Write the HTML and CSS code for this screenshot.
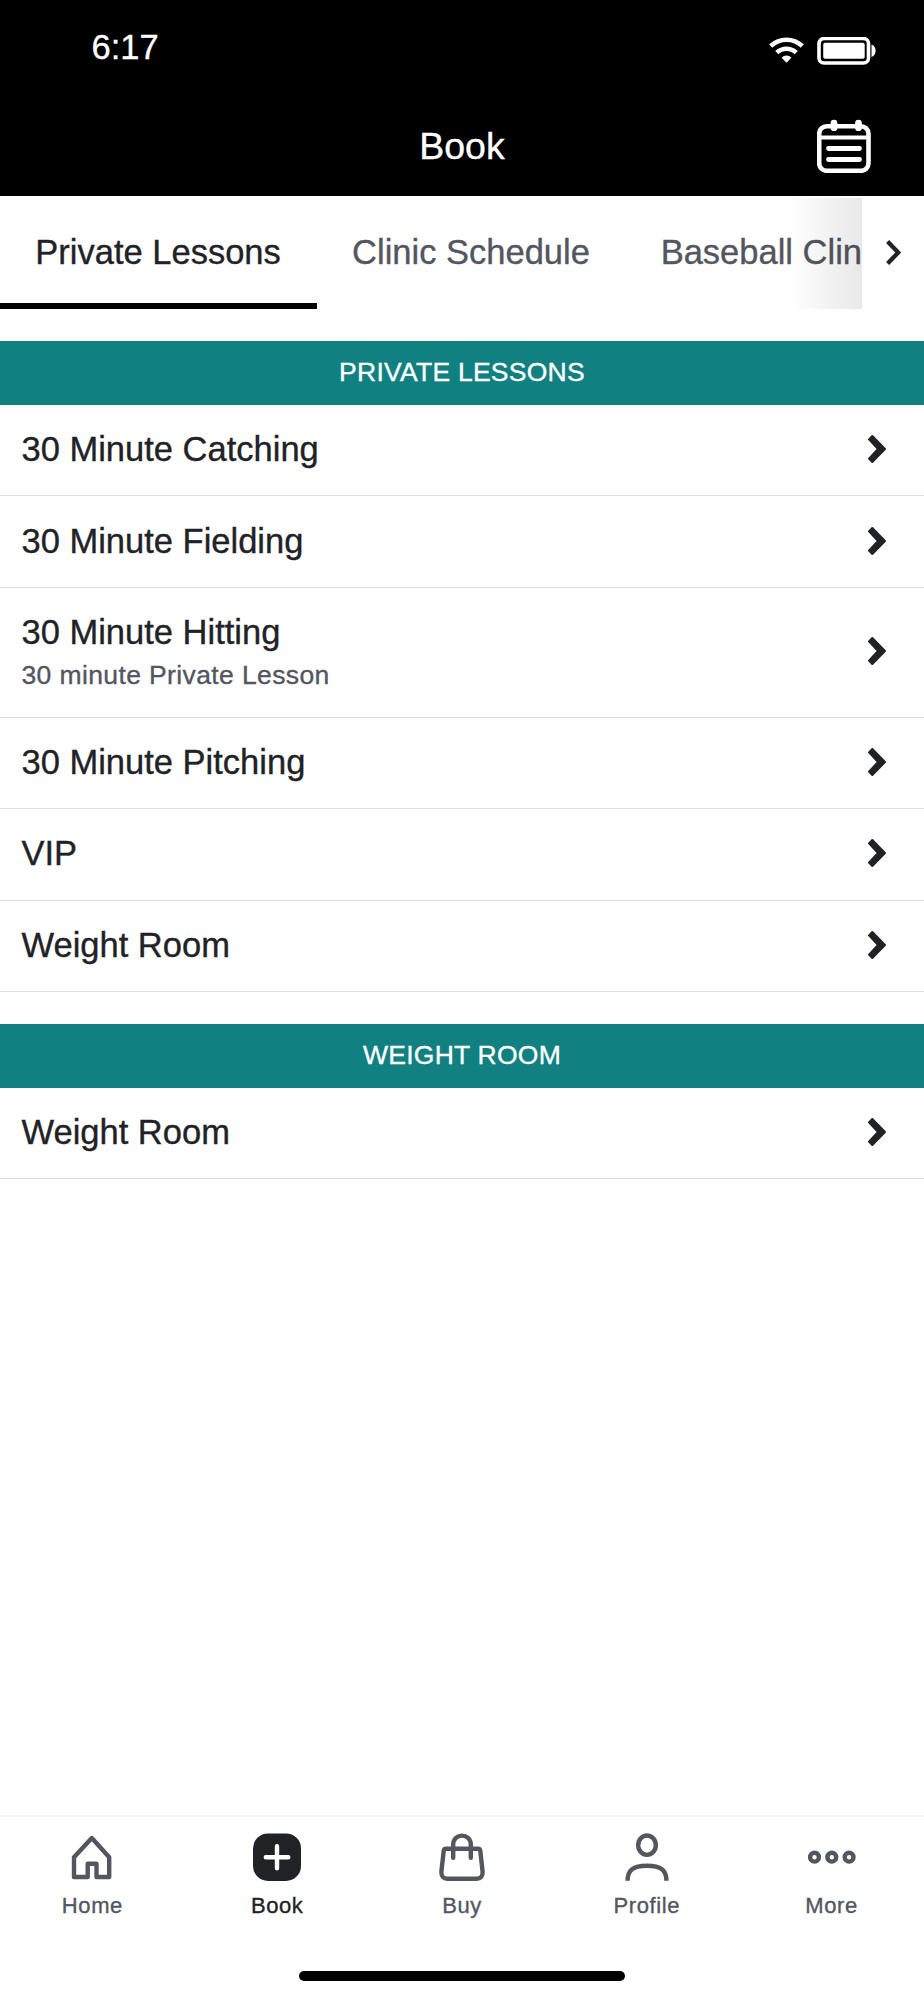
FILE: index.html
```html
<!DOCTYPE html>
<html lang="en">
<head>
<meta charset="utf-8">
<title>Book</title>
<link rel="stylesheet" href="styles.css">
</head>
<body>
<svg width="0" height="0" class="defs">
  <symbol id="chev" viewBox="0 0 18 28"><path d="M4.300 1 17 14 4.300 27 1 23.600 10 14 1 4.400Z" fill="#212226" stroke="#212226" stroke-width="2" stroke-linejoin="round"/></symbol>
</svg>
<div class="app">
  <header class="header">
    <div class="status">
      <span class="time">6:17</span>
      <svg class="status-icons" width="107" height="28" viewBox="0 0 107 28" fill="none" stroke="#fff">
        <path d="M1.700 9a23 23 0 0 1 31.600 0M7.800 15.600a14 14 0 0 1 19.400 0" stroke-width="4.600"/>
        <path d="M12.600 20.700a6.800 6.800 0 0 1 9.800 0l-4.900 5z" fill="#fff" stroke="none"/>
        <rect x="50" y="1.500" width="49.500" height="24.500" rx="5" stroke-width="3.600"/>
        <rect x="54.200" y="5.700" width="41.500" height="16" rx="2" fill="#fff" stroke="none"/>
        <path d="M102.500 7.500c5.500 2 5.500 10.500 0 12.500z" fill="#fff" stroke="none"/>
      </svg>
    </div>
    <div class="titlebar">
      <h1 class="title">Book</h1>
      <svg class="calendar" width="54" height="54" viewBox="0 0 54 54" fill="none" stroke="#fff" stroke-linecap="round">
        <rect x="2.200" y="7.300" width="49.300" height="44.500" rx="7.500" stroke-width="4.600"/>
        <path d="M4 18.500h46" stroke-width="4.200"/>
        <path d="M11.500 29.500h31M11.500 40.500h31" stroke-width="4.800"/>
        <path d="M17 4.200v4.500M41.500 4.200v4.500" stroke-width="6.800"/>
      </svg>
    </div>
  </header>
  <nav class="tabs">
    <div class="tab-scroll">
      <a class="tab active">Private Lessons</a>
      <a class="tab">Clinic Schedule</a>
      <a class="tab">Baseball Clin</a>
      <div class="fade"></div>
    </div>
    <svg class="tab-next" width="16" height="28" viewBox="0 0 16 28" fill="none" stroke="#212226" stroke-width="4.300"><path d="M1.600 2.600 12.200 13.600 1.600 24.600"/></svg>
  </nav>
  <main class="content">
    <section class="group">
      <h2 class="group-title">PRIVATE LESSONS</h2>
      <div class="row"><div class="name">30 Minute Catching</div><svg class="chev"><use href="#chev"/></svg></div>
      <div class="row"><div class="name">30 Minute Fielding</div><svg class="chev"><use href="#chev"/></svg></div>
      <div class="row tall"><div><div class="name">30 Minute Hitting</div><div class="desc">30 minute Private Lesson</div></div><svg class="chev"><use href="#chev"/></svg></div>
      <div class="row"><div class="name">30 Minute Pitching</div><svg class="chev"><use href="#chev"/></svg></div>
      <div class="row"><div class="name">VIP</div><svg class="chev"><use href="#chev"/></svg></div>
      <div class="row"><div class="name">Weight Room</div><svg class="chev"><use href="#chev"/></svg></div>
    </section>
    <section class="group">
      <h2 class="group-title">WEIGHT ROOM</h2>
      <div class="row"><div class="name">Weight Room</div><svg class="chev"><use href="#chev"/></svg></div>
    </section>
  </main>
  <footer class="bottom">
    <div class="nav">
      <a class="item">
        <svg class="icon" viewBox="0 0 50 50"><path d="M24.800 5 42.200 24.200V44H29.500V30.700H20.700V44H7V24.200Z"/></svg>
        <span>Home</span>
      </a>
      <a class="item current">
        <svg class="icon" viewBox="0 0 50 50"><rect class="solid" x="1" y="0.400" width="48" height="47.600" rx="15"/><path class="plus" d="M25 13.200v22M13.800 24.200h22.500"/></svg>
        <span>Book</span>
      </a>
      <a class="item">
        <svg class="icon" viewBox="0 0 50 50"><path d="M9 15.700H41Q43 15.700 43.300 18L45.600 38.500Q46.100 45.700 39.500 45.700H10.500Q3.900 45.700 4.400 38.500L6.700 18Q7 15.700 9 15.700Z"/><path class="round" d="M16.200 24.700V11.500C16.200 -.300 33.800 -.300 33.800 11.500V24.700"/></svg>
        <span>Buy</span>
      </a>
      <a class="item">
        <svg class="icon" viewBox="0 0 50 50"><ellipse cx="25" cy="12.200" rx="8.800" ry="9.700"/><path d="M5.600 47.700C5.600 37 11 32.700 25 32.700S44.400 37 44.400 47.700"/></svg>
        <span>Profile</span>
      </a>
      <a class="item">
        <svg class="icon" viewBox="0 0 50 50"><circle cx="7.500" cy="24.200" r="4.400"/><circle cx="24.800" cy="24.200" r="4.400"/><circle cx="42.100" cy="24.200" r="4.400"/></svg>
        <span>More</span>
      </a>
    </div>
    <div class="home-indicator"></div>
  </footer>
</div>
</body>
</html>
```
FILE: styles.css
```css
* { box-sizing: border-box; }
body { margin: 0; background: #fff; font-family: "Liberation Sans", Arial, sans-serif; color: #212226; -webkit-text-stroke: .350px currentColor; }
svg { display: block; flex: none; }
.defs { position: absolute; }
.app { width: 924px; height: 2000px; display: flex; flex-direction: column; overflow: hidden; }
.header { height: 196px; background: #000; color: #fff; }
.status { height: 96px; display: flex; justify-content: space-between; padding: 27px 48px 0 91.500px; }
.time { font-size: 34.500px; line-height: 40px; }
.status-icons { margin-top: 10px; }
.titlebar { height: 100px; display: grid; grid-template-columns: 1fr auto 1fr; padding: 23px 53px 0 53px; }
.title { grid-column: 2; margin: 6px 0 0; font-size: 37.500px; line-height: 42px; font-weight: 400; }
.calendar { justify-self: end; }
.tabs { height: 113px; display: flex; }
.tab-scroll { position: relative; width: 862px; display: flex; overflow: hidden; }
.tab { flex: none; padding: 36px 35.500px 0 35.300px; font-size: 34.500px; line-height: 40px; color: #53565f; white-space: nowrap; }
.tab.active { padding-right: 36px; color: #212226; border-bottom: 6px solid #000; }
.tab:last-of-type { padding-right: 0; }
.fade { position: absolute; top: 2px; right: 0; bottom: 0; width: 74px; background: linear-gradient(90deg, rgba(0,0,0,0), rgba(0,0,0,.09)); }
.tab-next { margin: 43px 0 0 24px; }
.group { padding-top: 32px; }
.group-title { margin: 0; height: 64px; background: #118080; color: #fff; font-size: 26.500px; letter-spacing: .250px; line-height: 63px; font-weight: 400; text-align: center; }
.row { height: 91.400px; border-bottom: 1px solid #dcdde1; padding: 0 38px 2px 21.500px; display: flex; align-items: center; justify-content: space-between; }
.row.tall { height: 130px; }
.name { font-size: 34.500px; line-height: 40px; }
.tall .name { padding-top: 3px; }
.desc { margin-top: 5px; font-size: 26.500px; line-height: 36px; letter-spacing: .380px; color: #53565f; }
.chev { width: 18px; height: 28px; }
.bottom { margin-top: auto; height: 185px; border-top: 2px solid #f7f7f8; display: flex; flex-direction: column; align-items: center; }
.nav { width: 100%; display: grid; grid-template-columns: repeat(5, 1fr); }
.item { display: flex; flex-direction: column; align-items: center; padding-top: 16px; color: #53565f; font-size: 22px; line-height: 26px; letter-spacing: .600px; }
.item span { margin-top: 10px; }
.icon { width: 50px; height: 50px; fill: none; stroke: #53565f; stroke-width: 4.400; stroke-linejoin: round; }
.current { color: #212226; }
.icon .solid { fill: #212226; stroke: none; }
.icon .plus { stroke: #fff; stroke-linecap: round; }
.icon .round { stroke-linecap: round; }
.home-indicator { margin-top: 52px; width: 326px; height: 10px; border-radius: 5px; background: #000; }
```
